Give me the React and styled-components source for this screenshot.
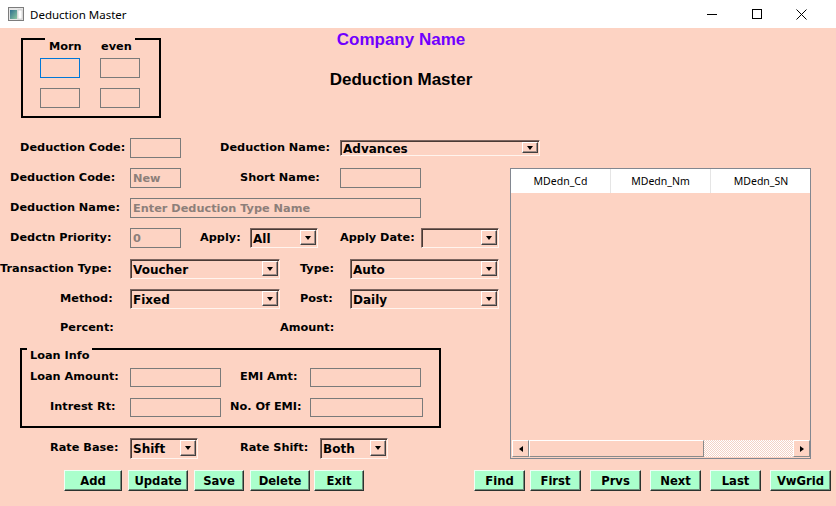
import React from 'react';
import styled, { createGlobalStyle } from 'styled-components';

const PEACH = '#fdd3c3';
const MINT = '#aaffcc';

const GlobalStyle = createGlobalStyle`
  html, body {
    margin: 0;
    padding: 0;
    background: ${PEACH};
  }
  * {
    box-sizing: border-box;
  }
`;

const Window = styled.div`
  width: 836px;
  height: 506px;
  background: ${PEACH};
  overflow: hidden;
  font-family: "DejaVu Sans", Verdana, sans-serif;
  font-size: 11.3px;
  font-weight: bold;
  color: #000;
`;

const TitleBar = styled.div`
  height: 28px;
  background: #fff;
  display: flex;
  align-items: center;
  padding-left: 8px;
`;

const TitleText = styled.span`
  margin-left: 6px;
  font-family: "Noto Sans", "Segoe UI", sans-serif;
  font-size: 11.5px;
  font-weight: normal;
`;

const WinControls = styled.div`
  margin-left: auto;
  display: flex;
  height: 28px;
  padding-right: 12px;
`;

const ControlBtn = styled.div`
  width: 45px;
  height: 28px;
  display: flex;
  align-items: center;
  justify-content: center;
`;

const Header = styled.div`
  display: flex;
  height: 105px;
`;

const GroupBox = styled.div`
  position: relative;
  flex-shrink: 0;
  border: 2px solid #000;
`;

const ShiftBox = styled(GroupBox)`
  margin: 10px 0 0 21px;
  width: 140px;
  height: 80px;
  display: grid;
  grid-template-columns: 40px 40px;
  grid-template-rows: 8px 20px 20px;
  column-gap: 20px;
  row-gap: 10px;
  padding-left: 17px;
`;

const BorderGap = styled.span`
  position: absolute;
  top: -2px;
  left: 22px;
  width: 90px;
  height: 2px;
  background: ${PEACH};
`;

const ShiftLabel = styled.span`
  height: 12px;
  line-height: 12px;
  margin-top: 1px;
  padding-left: ${p => p.$pl}px;
  white-space: nowrap;
`;

const TitleBlock = styled.div`
  width: 480px;
  text-align: center;
  padding-top: 2px;
  font-family: "Liberation Sans", Arial, sans-serif;
  font-size: 17px;
  font-weight: bold;
`;

const CompanyName = styled.div`
  color: #7000ff;
  line-height: 20px;
`;

const FormTitle = styled.div`
  line-height: 20px;
  margin-top: 20px;
`;

const Main = styled.div`
  display: flex;
  height: 330px;
`;

const LeftCol = styled.div`
  width: 510px;
  flex-shrink: 0;
  display: flex;
  flex-direction: column;
`;

const Row = styled.div`
  display: flex;
  align-items: center;
  height: 30px;
  flex-shrink: 0;
  margin-top: ${p => p.$mt || 0}px;
`;

const Label = styled.span`
  margin-left: ${p => p.$x || 0}px;
  width: ${p => p.$w}px;
  flex-shrink: 0;
  white-space: nowrap;
  line-height: 14px;
  margin-top: -1px;
`;

const TextBox = styled.input`
  margin-left: ${p => p.$x || 0}px;
  width: ${p => p.$w}px;
  height: ${p => p.$h || 20}px;
  flex-shrink: 0;
  padding: 0 2px;
  border: 1px solid ${p => (p.$focus ? '#0078d7' : '#7a7a7a')};
  background: ${PEACH};
  font: inherit;
  color: #8d7f7a;
  outline: none;
  &::placeholder {
    color: #8d7f7a;
  }
`;

const Combo = styled.div`
  margin-left: ${p => p.$x || 0}px;
  width: ${p => p.$w}px;
  height: ${p => p.$h || 20}px;
  flex-shrink: 0;
  display: flex;
  align-items: center;
  padding-left: 2px;
  border: 1px solid;
  border-color: #7d6660 #fff4ee #fff4ee #7d6660;
  box-shadow: inset 1px 1px 0 #4a3a35;
  background: ${PEACH};
  font-size: 12px;
`;

const ComboText = styled.span`
  flex: 1;
  padding-top: 2px;
  white-space: nowrap;
`;

const DropBtn = styled.span`
  align-self: stretch;
  width: 16px;
  margin: 1px 1px 2px 0;
  display: flex;
  align-items: center;
  justify-content: center;
  border: 1px solid;
  border-color: #fff #404040 #404040 #fff;
  box-shadow: inset -1px -1px 0 #a08c86;
  background: ${PEACH};
`;

const Caret = styled.span`
  width: 0;
  height: 0;
  margin-top: 1px;
  border-left: 3.5px solid transparent;
  border-right: 3.5px solid transparent;
  border-top: 4px solid #000;
`;

const LoanBox = styled(GroupBox)`
  margin: 5px 0 0 20px;
  width: 421px;
  height: 80px;
  padding-top: 12px;
`;

const Legend = styled.span`
  position: absolute;
  left: 5px;
  top: -3px;
  padding: 0 3px;
  line-height: 18px;
  background: ${PEACH};
`;

const GridPanel = styled.div`
  margin-top: 35px;
  width: 301px;
  height: 291px;
  flex-shrink: 0;
  border: 1px solid #828790;
  display: flex;
  flex-direction: column;
  background: ${PEACH};
`;

const GridHeader = styled.div`
  display: flex;
  height: 24px;
  background: #fff;
`;

const HeaderCell = styled.div`
  width: 100px;
  flex-shrink: 0;
  display: flex;
  align-items: center;
  justify-content: center;
  border-right: 1px solid #e5e5e5;
  font-family: "Noto Sans", "Segoe UI", sans-serif;
  font-size: 10.5px;
  font-weight: normal;
  color: #000;
  &:last-child {
    border-right: none;
  }
`;

const GridBody = styled.div`
  flex: 1;
`;

const HScroll = styled.div`
  display: flex;
  height: 17px;
  margin: 0 0 1px 1px;
`;

const ScrollPart = styled.div`
  width: ${p => p.$w}px;
  flex-shrink: 0;
  display: flex;
  align-items: center;
  justify-content: center;
  border: 1px solid;
  border-color: #fff #8a8a8a #8a8a8a #fff;
  background: ${PEACH};
`;

const Track = styled.div`
  flex: 1;
  background: repeating-conic-gradient(#fff 0 25%, #f3d2c6 0 50%) 0 0 / 2px 2px;
`;

const Arrow = styled.span`
  width: 0;
  height: 0;
  border-top: 3.5px solid transparent;
  border-bottom: 3.5px solid transparent;
  ${p => (p.$dir === 'left' ? 'border-right: 4px solid #000;' : 'border-left: 4px solid #000;')}
`;

const ButtonRow = styled.div`
  display: flex;
  height: 21px;
  margin-top: 7px;
`;

const Button = styled.button`
  margin-left: ${p => p.$x || 0}px;
  width: ${p => p.$w}px;
  height: 21px;
  flex-shrink: 0;
  padding: 0;
  border: 1px solid;
  border-color: #f0fff6 #2a332e #2a332e #f0fff6;
  box-shadow: inset -1px -1px 0 #6f8f7c;
  background: ${MINT};
  font: inherit;
  font-size: 11.6px;
  color: #000;
  text-align: center;
`;

const WinIcon = () => (
  <svg width="16" height="14" viewBox="0 0 16 14">
    <defs>
      <linearGradient id="ico" x1="0" y1="0" x2="1" y2="1">
        <stop offset="0" stopColor="#2f6f8f" />
        <stop offset="1" stopColor="#8cc7a0" />
      </linearGradient>
    </defs>
    <rect x="0.5" y="0.5" width="15" height="13" fill="#e6e6e6" stroke="#7c7c7c" />
    <rect x="2" y="3" width="7" height="9" fill="url(#ico)" />
    <rect x="10" y="3" width="4" height="9" fill="#fff" stroke="#b0b0b0" strokeWidth="0.5" />
  </svg>
);

const Select = ({ x, w, h, value }) => (
  <Combo $x={x} $w={w} $h={h}>
    <ComboText>{value}</ComboText>
    <DropBtn>
      <Caret />
    </DropBtn>
  </Combo>
);

const leftButtons = [
  { t: 'Add', x: 64, w: 58 },
  { t: 'Update', x: 6, w: 60 },
  { t: 'Save', x: 6, w: 50 },
  { t: 'Delete', x: 6, w: 60 },
  { t: 'Exit', x: 4, w: 50 },
];

const navButtons = [
  { t: 'Find', x: 110, w: 51 },
  { t: 'First', x: 5, w: 51 },
  { t: 'Prvs', x: 9, w: 51 },
  { t: 'Next', x: 9, w: 51 },
  { t: 'Last', x: 9, w: 51 },
  { t: 'VwGrid', x: 9, w: 61 },
];

export default function App() {
  return (
    <>
      <GlobalStyle />
      <Window>
        <TitleBar>
          <WinIcon />
          <TitleText>Deduction Master</TitleText>
          <WinControls>
            <ControlBtn>
              <svg width="10" height="10"><path d="M0 5.5H10" stroke="#000" /></svg>
            </ControlBtn>
            <ControlBtn>
              <svg width="10" height="10"><rect x="0.5" y="0.5" width="9" height="9" fill="none" stroke="#000" /></svg>
            </ControlBtn>
            <ControlBtn>
              <svg width="11" height="11"><path d="M0.5 0.5L10.5 10.5M10.5 0.5L0.5 10.5" stroke="#000" /></svg>
            </ControlBtn>
          </WinControls>
        </TitleBar>

        <Header>
          <ShiftBox>
            <BorderGap />
            <ShiftLabel $pl={9}>Morn</ShiftLabel>
            <ShiftLabel $pl={1}>even</ShiftLabel>
            <TextBox $w={40} $focus readOnly />
            <TextBox $w={40} readOnly />
            <TextBox $w={40} readOnly />
            <TextBox $w={40} readOnly />
          </ShiftBox>
          <TitleBlock>
            <CompanyName>Company Name</CompanyName>
            <FormTitle>Deduction Master</FormTitle>
          </TitleBlock>
        </Header>

        <Main>
          <LeftCol>
            <Row>
              <Label $x={20} $w={110}>Deduction Code:</Label>
              <TextBox $w={51} readOnly />
              <Label $x={39} $w={120}>Deduction Name:</Label>
              <Select w={200} h={16} value="Advances" />
            </Row>
            <Row>
              <Label $x={10} $w={120}>Deduction Code:</Label>
              <TextBox $w={51} value="New" readOnly />
              <Label $x={59} $w={100}>Short Name:</Label>
              <TextBox $w={81} readOnly />
            </Row>
            <Row>
              <Label $x={10} $w={120}>Deduction Name:</Label>
              <TextBox $w={291} placeholder="Enter Deduction Type Name" readOnly />
            </Row>
            <Row>
              <Label $x={10} $w={120}>Dedctn Priority:</Label>
              <TextBox $w={51} value="0" readOnly />
              <Label $x={19} $w={50}>Apply:</Label>
              <Select w={68} h={20} value="All" />
              <Label $x={22} $w={81}>Apply Date:</Label>
              <Select w={78} h={20} value="" />
            </Row>
            <Row $mt={1}>
              <Label $w={130}>Transaction Type:</Label>
              <Select w={150} h={20} value="Voucher" />
              <Label $x={20} $w={50}>Type:</Label>
              <Select w={149} h={20} value="Auto" />
            </Row>
            <Row>
              <Label $x={60} $w={70}>Method:</Label>
              <Select w={150} h={20} value="Fixed" />
              <Label $x={20} $w={50}>Post:</Label>
              <Select w={149} h={20} value="Daily" />
            </Row>
            <Row $mt={-1}>
              <Label $x={60} $w={220}>Percent:</Label>
              <Label $w={60}>Amount:</Label>
            </Row>

            <LoanBox>
              <Legend>Loan Info</Legend>
              <Row>
                <Label $x={8} $w={100}>Loan Amount:</Label>
                <TextBox $w={91} $h={19} readOnly />
                <Label $x={19} $w={70}>EMI Amt:</Label>
                <TextBox $w={111} $h={19} readOnly />
              </Row>
              <Row>
                <Label $x={28} $w={80}>Intrest Rt:</Label>
                <TextBox $w={91} $h={19} readOnly />
                <Label $x={9} $w={80}>No. Of EMI:</Label>
                <TextBox $w={113} $h={19} readOnly />
              </Row>
            </LoanBox>

            <Row $mt={5}>
              <Label $x={50} $w={80}>Rate Base:</Label>
              <Select w={68} h={21} value="Shift" />
              <Label $x={42} $w={80}>Rate Shift:</Label>
              <Select w={68} h={21} value="Both" />
            </Row>
          </LeftCol>

          <GridPanel>
            <GridHeader>
              <HeaderCell>MDedn_Cd</HeaderCell>
              <HeaderCell>MDedn_Nm</HeaderCell>
              <HeaderCell>MDedn_SN</HeaderCell>
            </GridHeader>
            <GridBody />
            <HScroll>
              <ScrollPart $w={17}><Arrow $dir="left" /></ScrollPart>
              <ScrollPart $w={175} />
              <Track />
              <ScrollPart $w={17}><Arrow $dir="right" /></ScrollPart>
            </HScroll>
          </GridPanel>
        </Main>

        <ButtonRow>
          {leftButtons.map(b => (
            <Button key={b.t} $x={b.x} $w={b.w}>{b.t}</Button>
          ))}
          {navButtons.map(b => (
            <Button key={b.t} $x={b.x} $w={b.w}>{b.t}</Button>
          ))}
        </ButtonRow>
      </Window>
    </>
  );
}
